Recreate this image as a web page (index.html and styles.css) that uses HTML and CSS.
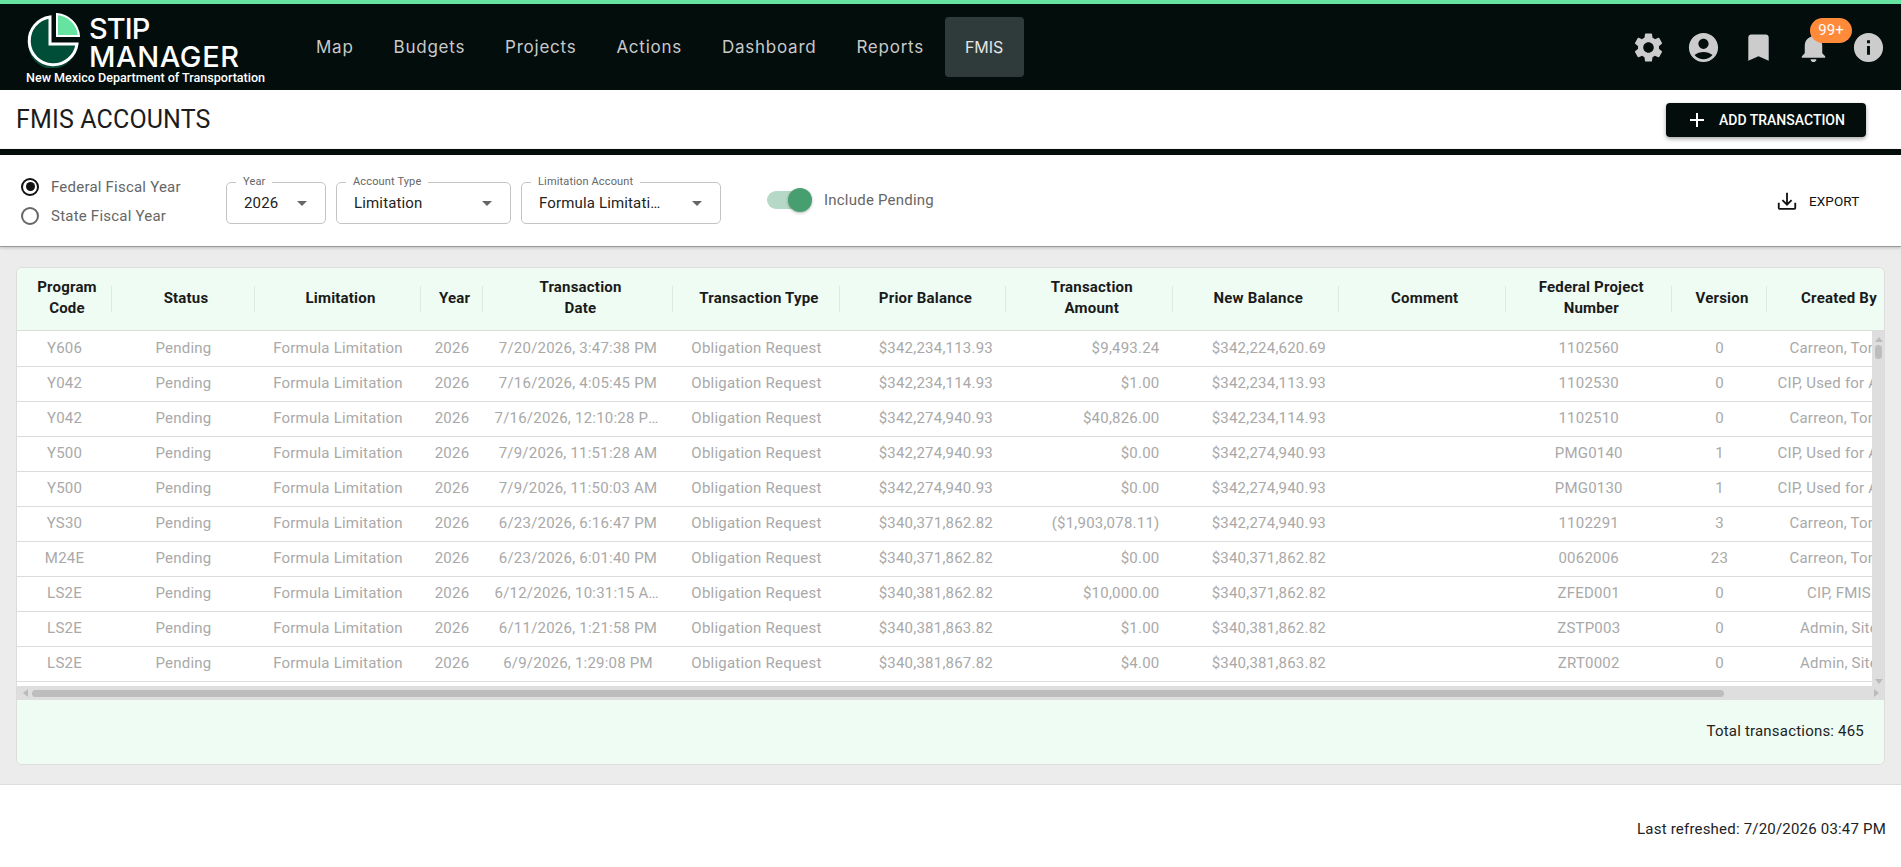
FILE: index.html
```html
<!DOCTYPE html>
<html lang="en">
<head>
<meta charset="utf-8">
<title>FMIS Accounts</title>
<link rel="stylesheet" href="styles.css">
</head>
<body>
<header class="topbar">
  <div class="brand">
    <div class="brand-top">
      <svg class="logo" viewBox="0 0 56 56" width="56" height="56">
        <path d="M24 6 A24 24 0 1 0 52 34 L26 34 L26 6 Z" fill="#0a4a38" transform="translate(-2 3)"/>
        <path d="M24 5 A24 24 0 1 0 51 32 L24 32 Z" fill="#004d38" stroke="#fff" stroke-width="3"/>
        <path d="M31 2 A24 24 0 0 1 53 24 L31 24 Z" fill="#66e3a0" stroke="#fff" stroke-width="2"/>
      </svg>
      <div class="brand-name"><span class="brand-stip">STIP</span><span class="brand-manager">MANAGER</span></div>
    </div>
    <div class="brand-sub">New Mexico Department of Transportation</div>
  </div>
  <nav class="nav">
    <a class="nav-item">Map</a>
    <a class="nav-item">Budgets</a>
    <a class="nav-item">Projects</a>
    <a class="nav-item">Actions</a>
    <a class="nav-item">Dashboard</a>
    <a class="nav-item">Reports</a>
    <a class="nav-item nav-active">FMIS</a>
  </nav>
  <div class="top-icons">
    <svg class="top-icon" viewBox="0 0 24 24"><path d="M19.14 12.94c.04-.3.06-.61.06-.94 0-.32-.02-.64-.07-.94l2.03-1.58c.18-.14.23-.41.12-.61l-1.92-3.32c-.12-.22-.37-.29-.59-.22l-2.39.96c-.5-.38-1.03-.7-1.62-.94l-.36-2.54c-.04-.24-.24-.41-.48-.41h-3.84c-.24 0-.43.17-.47.41l-.36 2.54c-.59.24-1.13.57-1.62.94l-2.39-.96c-.22-.08-.47 0-.59.22L2.74 8.87c-.12.21-.08.47.12.61l2.03 1.58c-.05.3-.09.63-.09.94s.02.64.07.94l-2.03 1.58c-.18.14-.23.41-.12.61l1.92 3.32c.12.22.37.29.59.22l2.39-.96c.5.38 1.03.7 1.62.94l.36 2.54c.05.24.24.41.48.41h3.84c.24 0 .44-.17.47-.41l.36-2.54c.59-.24 1.13-.56 1.62-.94l2.39.96c.22.08.47 0 .59-.22l1.92-3.32c.12-.22.07-.47-.12-.61l-2.01-1.58zM12 15.6c-1.98 0-3.6-1.62-3.6-3.6s1.62-3.6 3.6-3.6 3.6 1.62 3.6 3.6-1.62 3.6-3.6 3.6z"/></svg>
    <svg class="top-icon" viewBox="0 0 24 24"><path d="M12 2C6.48 2 2 6.48 2 12s4.48 10 10 10 10-4.48 10-10S17.52 2 12 2zm0 4c1.93 0 3.5 1.57 3.5 3.5S13.93 13 12 13s-3.5-1.57-3.5-3.5S10.07 6 12 6zm0 14c-2.03 0-4.43-.82-6.14-2.88C7.55 15.8 9.68 15 12 15s4.45.8 6.14 2.12C16.43 19.18 14.03 20 12 20z"/></svg>
    <svg class="top-icon" viewBox="0 0 24 24"><path d="M17 3H7c-1.1 0-1.99.9-1.99 2L5 21l7-3 7 3V5c0-1.1-.9-2-2-2z"/></svg>
    <div class="bell">
      <svg class="top-icon" viewBox="0 0 24 24"><path d="M12 22c1.1 0 2-.9 2-2h-4c0 1.1.89 2 2 2zm6-6v-5c0-3.07-1.64-5.64-4.5-6.32V4c0-.83-.67-1.5-1.5-1.5s-1.5.67-1.5 1.5v.68C7.63 5.36 6 7.92 6 11v5l-2 2v1h16v-1l-2-2z"/></svg>
      <span class="badge">99+</span>
    </div>
    <svg class="top-icon" viewBox="0 0 24 24"><path d="M12 2C6.48 2 2 6.48 2 12s4.48 10 10 10 10-4.48 10-10S17.52 2 12 2zm1 15h-2v-6h2v6zm0-8h-2V7h2v2z"/></svg>
  </div>
</header>

<section class="titlebar">
  <h1 class="title">FMIS ACCOUNTS</h1>
  <button class="add-btn">
    <svg viewBox="0 0 24 24" width="24" height="24"><path d="M19 13h-6v6h-2v-6H5v-2h6V5h2v6h6v2z" fill="#fff"/></svg>
    <span>ADD TRANSACTION</span>
  </button>
</section>

<section class="filters">
  <div class="radios">
    <label class="radio-row"><span class="radio radio-on"></span>Federal Fiscal Year</label>
    <label class="radio-row"><span class="radio"></span>State Fiscal Year</label>
  </div>
  <div class="selects">
    <div class="select select-year">
      <span class="select-label">Year</span>
      <span class="select-value">2026</span>
      <span class="caret"></span>
    </div>
    <div class="select select-type">
      <span class="select-label">Account Type</span>
      <span class="select-value">Limitation</span>
      <span class="caret"></span>
    </div>
    <div class="select select-account">
      <span class="select-label">Limitation Account</span>
      <span class="select-value">Formula Limitation Account</span>
      <span class="caret"></span>
    </div>
  </div>
  <div class="toggle-wrap">
    <span class="toggle"><span class="toggle-thumb"></span></span>
    <span class="toggle-label">Include Pending</span>
  </div>
  <button class="export-btn">
    <svg viewBox="0 0 24 24" width="22" height="22" fill="none" stroke="#111" stroke-width="2"><path d="M3 14v5.5a1 1 0 0 0 1 1h16a1 1 0 0 0 1-1V14"/><path d="M12 3v12.5M7 11l5 5 5-5"/></svg>
    <span>EXPORT</span>
  </button>
</section>

<main class="main">
  <div class="card">
    <div class="row head">
      <div class="th"><span>Program Code</span></div>
      <div class="th"><span>Status</span></div>
      <div class="th"><span>Limitation</span></div>
      <div class="th"><span>Year</span></div>
      <div class="th"><span>Transaction<br>Date</span></div>
      <div class="th"><span>Transaction Type</span></div>
      <div class="th"><span>Prior Balance</span></div>
      <div class="th"><span>Transaction<br>Amount</span></div>
      <div class="th"><span>New Balance</span></div>
      <div class="th"><span>Comment</span></div>
      <div class="th"><span>Federal Project<br>Number</span></div>
      <div class="th"><span>Version</span></div>
      <div class="th th-last"><span>Created By</span></div>
    </div>
    <div class="body-wrap">
      <div class="rows">
        <div class="row"><div class="td">Y606</div><div class="td">Pending</div><div class="td">Formula Limitation</div><div class="td">2026</div><div class="td">7/20/2026, 3:47:38 PM</div><div class="td">Obligation Request</div><div class="td num">$342,234,113.93</div><div class="td num">$9,493.24</div><div class="td num">$342,224,620.69</div><div class="td"></div><div class="td">1102560</div><div class="td">0</div><div class="td">Carreon, Tomy</div></div>
        <div class="row"><div class="td">Y042</div><div class="td">Pending</div><div class="td">Formula Limitation</div><div class="td">2026</div><div class="td">7/16/2026, 4:05:45 PM</div><div class="td">Obligation Request</div><div class="td num">$342,234,114.93</div><div class="td num">$1.00</div><div class="td num">$342,234,113.93</div><div class="td"></div><div class="td">1102530</div><div class="td">0</div><div class="td">CIP, Used for Auto</div></div>
        <div class="row"><div class="td">Y042</div><div class="td">Pending</div><div class="td">Formula Limitation</div><div class="td">2026</div><div class="td">7/16/2026, 12:10:28 PM</div><div class="td">Obligation Request</div><div class="td num">$342,274,940.93</div><div class="td num">$40,826.00</div><div class="td num">$342,234,114.93</div><div class="td"></div><div class="td">1102510</div><div class="td">0</div><div class="td">Carreon, Tomy</div></div>
        <div class="row"><div class="td">Y500</div><div class="td">Pending</div><div class="td">Formula Limitation</div><div class="td">2026</div><div class="td">7/9/2026, 11:51:28 AM</div><div class="td">Obligation Request</div><div class="td num">$342,274,940.93</div><div class="td num">$0.00</div><div class="td num">$342,274,940.93</div><div class="td"></div><div class="td">PMG0140</div><div class="td">1</div><div class="td">CIP, Used for Auto</div></div>
        <div class="row"><div class="td">Y500</div><div class="td">Pending</div><div class="td">Formula Limitation</div><div class="td">2026</div><div class="td">7/9/2026, 11:50:03 AM</div><div class="td">Obligation Request</div><div class="td num">$342,274,940.93</div><div class="td num">$0.00</div><div class="td num">$342,274,940.93</div><div class="td"></div><div class="td">PMG0130</div><div class="td">1</div><div class="td">CIP, Used for Auto</div></div>
        <div class="row"><div class="td">YS30</div><div class="td">Pending</div><div class="td">Formula Limitation</div><div class="td">2026</div><div class="td">6/23/2026, 6:16:47 PM</div><div class="td">Obligation Request</div><div class="td num">$340,371,862.82</div><div class="td num">($1,903,078.11)</div><div class="td num">$342,274,940.93</div><div class="td"></div><div class="td">1102291</div><div class="td">3</div><div class="td">Carreon, Tomy</div></div>
        <div class="row"><div class="td">M24E</div><div class="td">Pending</div><div class="td">Formula Limitation</div><div class="td">2026</div><div class="td">6/23/2026, 6:01:40 PM</div><div class="td">Obligation Request</div><div class="td num">$340,371,862.82</div><div class="td num">$0.00</div><div class="td num">$340,371,862.82</div><div class="td"></div><div class="td">0062006</div><div class="td">23</div><div class="td">Carreon, Tomy</div></div>
        <div class="row"><div class="td">LS2E</div><div class="td">Pending</div><div class="td">Formula Limitation</div><div class="td">2026</div><div class="td">6/12/2026, 10:31:15 AM</div><div class="td">Obligation Request</div><div class="td num">$340,381,862.82</div><div class="td num">$10,000.00</div><div class="td num">$340,371,862.82</div><div class="td"></div><div class="td">ZFED001</div><div class="td">0</div><div class="td">CIP, FMIS</div></div>
        <div class="row"><div class="td">LS2E</div><div class="td">Pending</div><div class="td">Formula Limitation</div><div class="td">2026</div><div class="td">6/11/2026, 1:21:58 PM</div><div class="td">Obligation Request</div><div class="td num">$340,381,863.82</div><div class="td num">$1.00</div><div class="td num">$340,381,862.82</div><div class="td"></div><div class="td">ZSTP003</div><div class="td">0</div><div class="td">Admin, Site</div></div>
        <div class="row"><div class="td">LS2E</div><div class="td">Pending</div><div class="td">Formula Limitation</div><div class="td">2026</div><div class="td">6/9/2026, 1:29:08 PM</div><div class="td">Obligation Request</div><div class="td num">$340,381,867.82</div><div class="td num">$4.00</div><div class="td num">$340,381,863.82</div><div class="td"></div><div class="td">ZRT0002</div><div class="td">0</div><div class="td">Admin, Site</div></div>
      </div>
      <div class="vbar">
        <span class="arrow arrow-up"></span>
        <span class="vthumb"></span>
        <span class="arrow arrow-down"></span>
      </div>
    </div>
    <div class="hbar">
      <span class="arrow arrow-left"></span>
      <span class="hthumb"></span>
      <span class="arrow arrow-right"></span>
    </div>
    <div class="card-foot">Total transactions: 465</div>
  </div>
</main>

<footer class="page-foot">Last refreshed: 7/20/2026 03:47 PM</footer>
</body>
</html>
```

FILE: styles.css
```css
* { box-sizing: border-box; }
html, body { margin: 0; height: 100%; }
body {
  width: 1901px;
  height: 867px;
  overflow: hidden;
  background: #fff;
  color: #222;
  font-family: Roboto, "Liberation Sans", sans-serif;
  font-size: 15px;
  letter-spacing: .2px;
  display: flex;
  flex-direction: column;
}

/* top bar */
.topbar {
  height: 90px;
  flex: none;
  background: #020d0c;
  border-top: 4px solid #66e3a0;
  display: flex;
  align-items: center;
  padding: 0 15px 0 26px;
}
.brand { width: 280px; flex: none; color: #fff; height: 86px; padding-top: 8px; }
.brand-top { display: flex; align-items: flex-start; gap: 8px; height: 59px; }
.logo { flex: none; }
.brand-name { display: flex; flex-direction: column; font-family: Inter, sans-serif; font-weight: 500; font-size: 29px; line-height: 28px; padding-top: 3px; margin-left: -1px; }
.brand-stip { letter-spacing: -.9px; }
.brand-manager { letter-spacing: .6px; }
.brand-sub { font-size: 12.6px; font-weight: 500; letter-spacing: -.02px; line-height: 14px; white-space: nowrap; }
.nav { display: flex; align-items: center; height: 60px; margin-left: -10px; }
.nav-item { color: #c9c9c9; font-family: Inter, sans-serif; font-size: 17px; letter-spacing: .75px; padding: 0 20px; height: 60px; line-height: 60px; border-radius: 4px; }
.nav-active { background: #2f3b3a; color: #e4e4e4; font-size: 16px; letter-spacing: 0; padding: 0 21px 0 20px; margin-left: 1px; }
.top-icons { margin-left: auto; display: flex; align-items: center; gap: 20px; }
.top-icon { width: 35px; height: 35px; fill: #cccccc; display: block; }
.bell { position: relative; }
.badge {
  position: absolute; left: 14px; top: -12px;
  width: 42px; height: 25px; border-radius: 13px;
  background: #ff8a3a; color: #fff; font-size: 15px; line-height: 25px; text-align: center; letter-spacing: 0;
}

/* title */
.titlebar { height: 59px; flex: none; display: flex; align-items: center; justify-content: space-between; padding: 0 35px 0 16px; }
.title { margin: 0; font-size: 25px; font-weight: 400; letter-spacing: .15px; color: #1c1c1c; }
.add-btn {
  width: 200px; height: 34px; display: flex; align-items: center; gap: 10px; padding: 0 0 0 19px;
  background: #020d0c; color: #fff; border: 0; border-radius: 4px;
  font: 500 14px Roboto, sans-serif; letter-spacing: 0;
  box-shadow: 0 2px 4px rgba(0,0,0,.35);
}

/* filters */
.filters { height: 98px; flex: none; border-top: 6px solid #020d0c; border-bottom: 1px solid #999; box-shadow: 0 1px 3px rgba(0,0,0,.2); display: flex; align-items: flex-start; position: relative; padding-left: 21px; background: #fff; }
.radios { width: 205px; flex: none; padding-top: 17px; }
.radio-row { display: flex; align-items: center; gap: 12px; height: 29px; color: #666; letter-spacing: .22px; }
.radio { width: 18px; height: 18px; border: 2px solid #666; border-radius: 50%; display: flex; align-items: center; justify-content: center; flex: none; }
.radio-on { border-color: #111; }
.radio-on::after { content: ""; width: 9px; height: 9px; border-radius: 50%; background: #111; }
.selects { display: flex; gap: 10px; padding-top: 27px; }
.select { position: relative; height: 42px; border: 1px solid #c4c4c4; border-radius: 5px; display: flex; align-items: center; padding-left: 17px; color: #222; }
.select-year { width: 100px; }
.select-type { width: 175px; }
.select-account { width: 200px; }
.select-label { position: absolute; left: 9px; top: -6px; padding: 0 7px; background: #fff; font-size: 11px; line-height: 10px; color: #666; white-space: nowrap; letter-spacing: .15px; }
.select-value { font-size: 15px; letter-spacing: .15px; white-space: nowrap; overflow: hidden; text-overflow: ellipsis; width: 122px; }
.select-year .select-value { width: 50px; }
.select-type .select-value { width: 125px; }
.caret { margin-left: auto; margin-right: 18px; width: 0; height: 0; border-left: 5.5px solid transparent; border-right: 5.5px solid transparent; border-top: 5.5px solid #666; }
.toggle-wrap { display: flex; align-items: center; gap: 12px; margin-left: 46px; margin-top: 27px; height: 36px; }
.toggle { position: relative; display: block; width: 35px; height: 18px; border-radius: 9px; background: #b5d9c5; }
.toggle-thumb { position: absolute; left: 21px; top: -3px; width: 24px; height: 24px; border-radius: 50%; background: #479f6f; box-shadow: 0 1px 3px rgba(0,0,0,.3); }
.toggle-label { color: #666; letter-spacing: .22px; margin-left: 10px; }
.export-btn { position: absolute; left: 1776px; top: 35px; display: flex; align-items: center; gap: 11px; background: none; border: 0; padding: 0; color: #111; font: 400 13.5px Roboto, sans-serif; letter-spacing: .1px; }

/* card */
.main { height: 538px; flex: none; background: #ececec; padding: 20px 16px; border-bottom: 1px solid #ddd; }
.card { width: 1869px; height: 498px; border: 1px solid #dcdcdc; border-radius: 6px; overflow: hidden; background: #fff; }
.row { display: grid; grid-template-columns: 95px 143px 166px 62px 190px 167px 166px 166.5px 166.5px 166.5px 166.5px 95px 144px; width: 1910px; flex: none; }
.head { height: 63px; background: #eefcf4; border-bottom: 1px solid #dcdcdc; }
.th { position: relative; display: flex; align-items: center; justify-content: center; text-align: center; font-weight: 700; color: #1a1a1a; line-height: 21px; letter-spacing: .2px; padding: 0 0 2px 5px; }
.th::after { content: ""; position: absolute; right: 0; top: 18px; width: 1px; height: 26px; background: #e0e8e3; }
.th:first-child { padding: 0 12px 2px 17px; }
.th-last { padding-left: 0; }
.th-last::after { display: none; }
.body-wrap { display: flex; height: 355px; }
.rows { width: 1855px; flex: none; overflow: hidden; }
.rows .row { height: 35px; border-bottom: 1px solid #dcdcdc; align-items: center; padding-bottom: 2px; }
.rows .row:first-child { height: 36px; }
.td { color: #a9a9a9; text-align: center; white-space: nowrap; overflow: hidden; text-overflow: ellipsis; padding: 0 11.5px; letter-spacing: .22px; }
.num { text-align: right; padding-right: 13px; }
.td:last-child { overflow: visible; text-overflow: clip; padding: 0; white-space: nowrap; }
.vbar { width: 13px; flex: none; background: #dedede; display: flex; flex-direction: column; align-items: center; padding: 6px 0 2px; }
.vthumb { width: 7px; height: 14px; border-radius: 4px; background: #bdbdbd; margin-top: 3px; }
.hbar { height: 14px; background: #dedede; display: flex; align-items: center; padding: 0 5px; }
.hthumb { width: 1692px; height: 7px; border-radius: 4px; background: #bdbdbd; margin-left: 4px; }
.arrow { width: 0; height: 0; display: block; flex: none; }
.arrow-up { border-left: 4px solid transparent; border-right: 4px solid transparent; border-bottom: 5px solid #bbb; }
.arrow-down { border-left: 4px solid transparent; border-right: 4px solid transparent; border-top: 5px solid #bbb; margin-top: auto; }
.arrow-left { border-top: 4px solid transparent; border-bottom: 4px solid transparent; border-right: 5px solid #bbb; margin-left: 1px; }
.arrow-right { border-top: 4px solid transparent; border-bottom: 4px solid transparent; border-left: 5px solid #bbb; margin-left: auto; }
.card-foot { height: 64px; background: #eefcf4; display: flex; align-items: center; justify-content: flex-end; padding: 0 20px 2px 0; color: #222; letter-spacing: .2px; }
.page-foot { flex: 1; display: flex; align-items: center; justify-content: flex-end; padding: 6px 15px 0 0; color: #222; letter-spacing: .2px; }
```
